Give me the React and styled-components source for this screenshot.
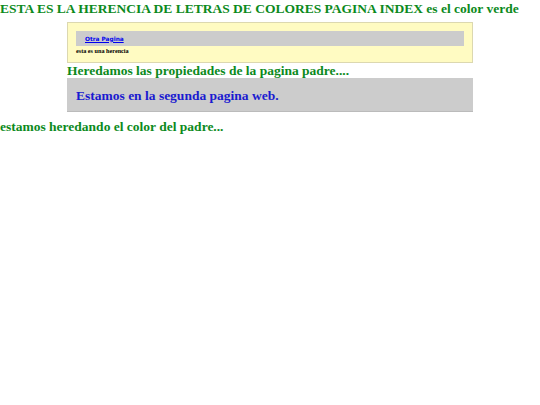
import React from "react";
import styled, { createGlobalStyle } from "styled-components";

const Global = createGlobalStyle`
  html, body {
    margin: 0;
    padding: 0;
    background: #fff;
  }
  body {
    font-family: "Liberation Serif", "Times New Roman", serif;
    color: green;
  }
`;

const Page = styled.div`
  display: flex;
  flex-direction: column;
`;

const Heading = styled.h1`
  margin: 0;
  padding-top: 1px;
  font-size: 13.5px;
  line-height: 15px;
  font-weight: bold;
  color: #0c8a1c;
`;

const Content = styled.div`
  display: flex;
  flex-direction: column;
  margin: 6px 67px 0;
  width: 406px;
`;

const Herencia = styled.div`
  background: #fffbc2;
  border: 1px solid #dcd8b0;
  padding: 8px 8px 10px 8px;
  height: 41px;
  box-sizing: border-box;
`;

const NavBar = styled.div`
  background: #cccccc;
  height: 15px;
  display: flex;
  align-items: center;
  padding-left: 9px;
`;

const NavLink = styled.a`
  font-family: Verdana, "DejaVu Sans", sans-serif;
  font-size: 5.8px;
  font-weight: bold;
  color: #0000ee;
  text-decoration: underline;
`;

const Note = styled.p`
  margin: 1px 0 0;
  font-size: 6.2px;
  line-height: 8px;
  font-weight: bold;
  color: #000;
`;

const SubHeading = styled.h2`
  margin: 0;
  font-size: 13.5px;
  line-height: 15px;
  font-weight: bold;
  color: #0c8a1c;
`;

const Panel = styled.div`
  background: #cccccc;
  border-bottom: 1px solid #bbb;
  height: 34px;
  box-sizing: border-box;
  display: flex;
  align-items: center;
  padding: 3px 0 0 9px;
`;

const PanelText = styled.h2`
  margin: 0;
  font-size: 13.5px;
  font-weight: bold;
  color: #1a1ad0;
`;

const Footer = styled.h2`
  margin: 7px 0 0;
  font-size: 13.5px;
  line-height: 15px;
  font-weight: bold;
  color: #0c8a1c;
`;

export default function App() {
  return (
    <Page>
      <Global />
      <Heading>ESTA ES LA HERENCIA DE LETRAS DE COLORES PAGINA INDEX es el color verde</Heading>
      <Content>
        <Herencia>
          <NavBar>
            <NavLink href="#">Otra Pagina</NavLink>
          </NavBar>
          <Note>esta es una herencia</Note>
        </Herencia>
        <SubHeading>Heredamos las propiedades de la pagina padre....</SubHeading>
        <Panel>
          <PanelText>Estamos en la segunda pagina web.</PanelText>
        </Panel>
      </Content>
      <Footer>estamos heredando el color del padre...</Footer>
    </Page>
  );
}
